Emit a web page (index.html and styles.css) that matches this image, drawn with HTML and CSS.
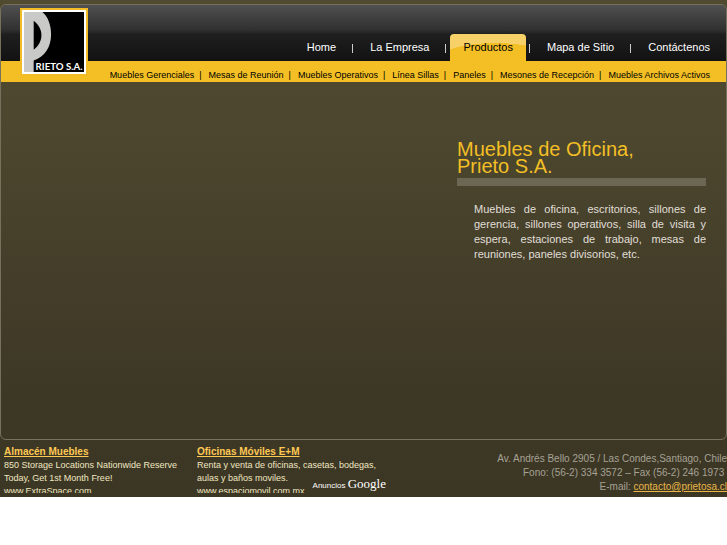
FILE: index.html
```
<!DOCTYPE html>
<html lang="es">
<head>
    <meta charset="UTF-8">
    <meta name="viewport" content="width=device-width, initial-scale=1.0">
    <title>Muebles de Oficina, Prieto S.A.</title>
    <link rel="stylesheet" href="styles.css">
</head>
<body>
    <div class="page">
        <div class="panel">
            <header class="header">
                <a class="logo" href="#" aria-label="Prieto S.A.">
                    <svg viewBox="0 0 62 62" width="62" height="62">
                        <rect width="62" height="62" fill="#000"/>
                        <path fill="#c9c9c7" d="M0 0H19C25 5 28 14 28 23C28 36 22 46 10 50V62H0Z"/>
                        <path fill="#000" d="M10 9C15 13 18 18 18 24C18 30 15 35 10 39Z"/>
                        <text class="logo-text" x="12" y="60">RIETO S.A.</text>
                    </svg>
                </a>
                <nav class="menu">
                    <a href="#">Home</a>
                    <a href="#">La Empresa</a>
                    <a href="#" class="active"><span>Productos</span></a>
                    <a href="#">Mapa de Sitio</a>
                    <a href="#">Contáctenos</a>
                </nav>
            </header>
            <nav class="submenu">
                <a href="#">Muebles Gerenciales</a>
                <a href="#">Mesas de Reunión</a>
                <a href="#">Muebles Operativos</a>
                <a href="#">Línea Sillas</a>
                <a href="#">Paneles</a>
                <a href="#">Mesones de Recepción</a>
                <a href="#">Muebles Archivos Activos</a>
            </nav>
            <main class="content">
                <h1>Muebles de Oficina,<br>Prieto S.A.</h1>
                <p>Muebles de oficina, escritorios, sillones de gerencia, sillones operativos, silla de visita y espera, estaciones de trabajo, mesas de reuniones, paneles divisorios, etc.</p>
            </main>
        </div>
        <footer class="footer">
            <div class="ads">
                <div class="ad">
                    <a href="#">Almacén Muebles</a>
                    <p>850 Storage Locations Nationwide Reserve Today, Get 1st Month Free!</p>
                    <p>www.ExtraSpace.com</p>
                </div>
                <div class="ad">
                    <a href="#">Oficinas Móviles E+M</a>
                    <p>Renta y venta de oficinas, casetas, bodegas, aulas y baños moviles.</p>
                    <p>www.espaciomovil.com.mx</p>
                </div>
                <div class="ads-by">Anuncios <span>Google</span></div>
            </div>
            <address class="address">
                Av. Andrés Bello 2905 / Las Condes,Santiago, Chile<br>
                Fono: (56-2) 334 3572 – Fax (56-2) 246 1973&nbsp;<br>
                E-mail: <a href="mailto:contacto@prietosa.cl">contacto@prietosa.cl</a>
            </address>
        </footer>
    </div>
</body>
</html>
```
FILE: styles.css
```
* {
    box-sizing: border-box;
}
body {
    margin: 0;
    background-color: #fff;
    font-family: "Liberation Sans", Arial, Helvetica, sans-serif;
    font-size: 11px;
}
.page {
    padding-top: 4px;
    background: linear-gradient(#4f4a30, #4c472e 25%, #3d3726 80%, #3c3625);
}
.panel {
    min-height: 436px;
    border: 1px solid #75715c;
    border-radius: 6px;
}

/* Dark top bar */
.header {
    position: relative;
    display: flex;
    justify-content: flex-end;
    align-items: flex-end;
    height: 56px;
    border-radius: 5px 5px 0 0;
    background: linear-gradient(#505050, #303030 45%, #1f1f1f 52%, #121212);
}
/* The logo hangs over the yellow bar */
.logo {
    position: absolute;
    top: 3px;
    left: 19px;
    width: 68px;
    height: 68px;
    border: 2px solid #f2bd24;
    padding: 1px;
    background-color: #fff;
}
.logo svg {
    display: block;
    border: 1px solid #fff;
}
.logo-text {
    font: bold 10px Lato, sans-serif;
    fill: #fff;
}
.menu {
    display: flex;
}
.menu a {
    position: relative;
    padding: 0 17px;
    line-height: 27px;
    color: #fff;
    text-decoration: none;
}
.menu a:last-child {
    padding-right: 16px;
}
.menu a + a::before {
    content: "";
    position: absolute;
    top: 10px;
    left: -1px;
    width: 1px;
    height: 9px;
    background-color: #ccc;
}
.menu a.active {
    padding: 0 4px;
    color: #000;
}
.menu a.active span {
    display: block;
    padding: 0 13px;
    border-radius: 4px 4px 0 0;
    background: radial-gradient(ellipse 60px 18px at 60% 100%, #f3bf25 99%, #f7d168);
}

/* Yellow bar */
.submenu {
    display: flex;
    justify-content: flex-end;
    height: 21px;
    padding: 5px 16px 0 0;
    background-color: #f3bf25;
    font-size: 9px;
    line-height: 18px;
    white-space: nowrap;
}
.submenu a {
    color: #000;
    text-decoration: none;
}
.submenu a:not(:last-child)::after {
    content: "|";
    margin: 0 7px 0 5px;
}

.content {
    width: 249px;
    margin: 59px 20px 0 auto;
}
.content h1 {
    margin: 0;
    padding-bottom: 3px;
    border-bottom: 8px solid #6b6753;
    font-size: 20px;
    font-weight: normal;
    line-height: 17px;
    color: #f3bf25;
}
.content p {
    margin: 16px 0 0;
    padding-left: 17px;
    line-height: 15px;
    color: #e0dfd8;
    text-align: justify;
}

.footer {
    display: flex;
    justify-content: space-between;
    height: 57px;
}
.ads {
    position: relative;
    display: flex;
    height: 53px;
    padding: 5px 0 0 4px;
    overflow: hidden;
}
.ad {
    width: 193px;
    padding-right: 4px;
    font-size: 9px;
    line-height: 13px;
    color: #f0e8c0;
}
.ad p {
    margin: 0;
}
.ad a {
    font-size: 10px;
    font-weight: bold;
    color: #ffc954;
}
.ads-by {
    position: absolute;
    right: 4px;
    bottom: 0;
    font-size: 8px;
    line-height: 14px;
    color: #fff;
}
.ads-by span {
    font: 13px "Liberation Serif", serif;
    line-height: 14px;
}
.address {
    padding-top: 12px;
    font-size: 10px;
    font-style: normal;
    line-height: 14px;
    color: #a5a294;
    text-align: right;
}
.address a {
    color: #e9b747;
}
```
